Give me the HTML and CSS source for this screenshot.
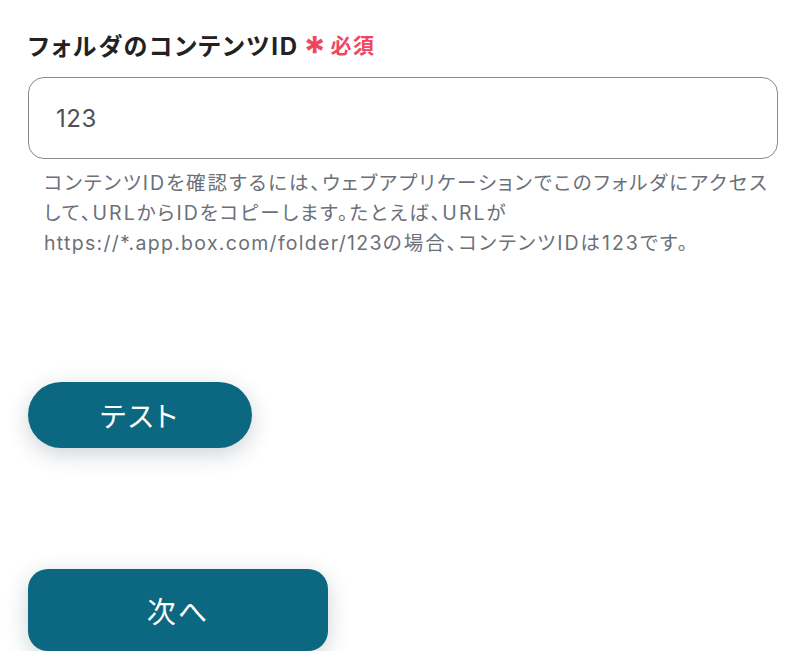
FILE: index.html
```html
<!DOCTYPE html>
<html lang="ja">
<head>
<meta charset="utf-8">
<link rel="stylesheet" href="styles.css">
</head>
<body>
<div class="page">
  <div class="field">
    <div class="label">
      <span class="label-text">フォルダのコンテンツID</span>
      <span class="req-mark">*</span>
      <span class="req-text">必須</span>
    </div>
    <div class="input">123</div>
    <p class="help">コンテンツIDを確認するには、ウェブアプリケーションでこのフォルダにアクセスして、URLからIDをコピーします。たとえば、URLが<span class="url">https://*.app.box.com/folder/123</span>の場合、コンテンツIDは123です。</p>
  </div>
  <div class="actions-test">
    <button class="btn btn-test">テスト</button>
  </div>
  <div class="actions-next">
    <button class="btn btn-next">次へ</button>
  </div>
</div>
</body>
</html>
```
FILE: styles.css
```css
html, body {
  margin: 0;
  padding: 0;
  background: #ffffff;
}
body {
  font-family: Inter, "Noto Sans CJK JP", sans-serif;
  color: #222;
  font-feature-settings: "palt";
}
.page {
  padding: 25px 34px 0 28px;
  display: flex;
  flex-direction: column;
}
.field {
  display: flex;
  flex-direction: column;
}
.label {
  display: flex;
  align-items: center;
  height: 38px;
}
.label-text {
  font-size: 24px;
  font-weight: 700;
  color: #222;
  letter-spacing: 1.9px;
}
.req-mark {
  color: #f0465f;
  font-size: 42px;
  font-weight: 700;
  margin-left: 4px;
  line-height: 1;
  position: relative;
  top: 8px;
}
.req-text {
  color: #f0465f;
  font-size: 21px;
  font-weight: 700;
  margin-left: 4px;
  letter-spacing: 1.5px;
}
.input {
  margin-top: 14px;
  height: 80px;
  border: 1px solid #8a8a8a;
  border-radius: 16px;
  display: flex;
  align-items: center;
  padding-left: 27px;
  font-size: 24px;
  letter-spacing: 0.5px;
  color: #4b5058;
}
.help {
  margin: 9px 0 0 0;
  padding: 0 0 0 16px;
  font-size: 19.5px;
  line-height: 30px;
  letter-spacing: 2px;
  color: #6b7079;
}
.url {
  letter-spacing: 1.3px;
}
.actions-test {
  margin-top: 124px;
  display: flex;
}
.actions-next {
  margin-top: 121px;
  display: flex;
}
.btn {
  font-family: Inter, "Noto Sans CJK JP", sans-serif;
  font-feature-settings: "palt";
  border: none;
  background: #0b6880;
  color: #fff;
  cursor: pointer;
  box-shadow: 0 6px 22px rgba(30, 50, 70, 0.22);
}
.btn-test {
  width: 224px;
  height: 66px;
  border-radius: 33px;
  font-size: 28px;
  letter-spacing: 2.5px;
}
.btn-next {
  width: 300px;
  height: 82px;
  border-radius: 20px;
  font-size: 29px;
  letter-spacing: 2px;
}
```
